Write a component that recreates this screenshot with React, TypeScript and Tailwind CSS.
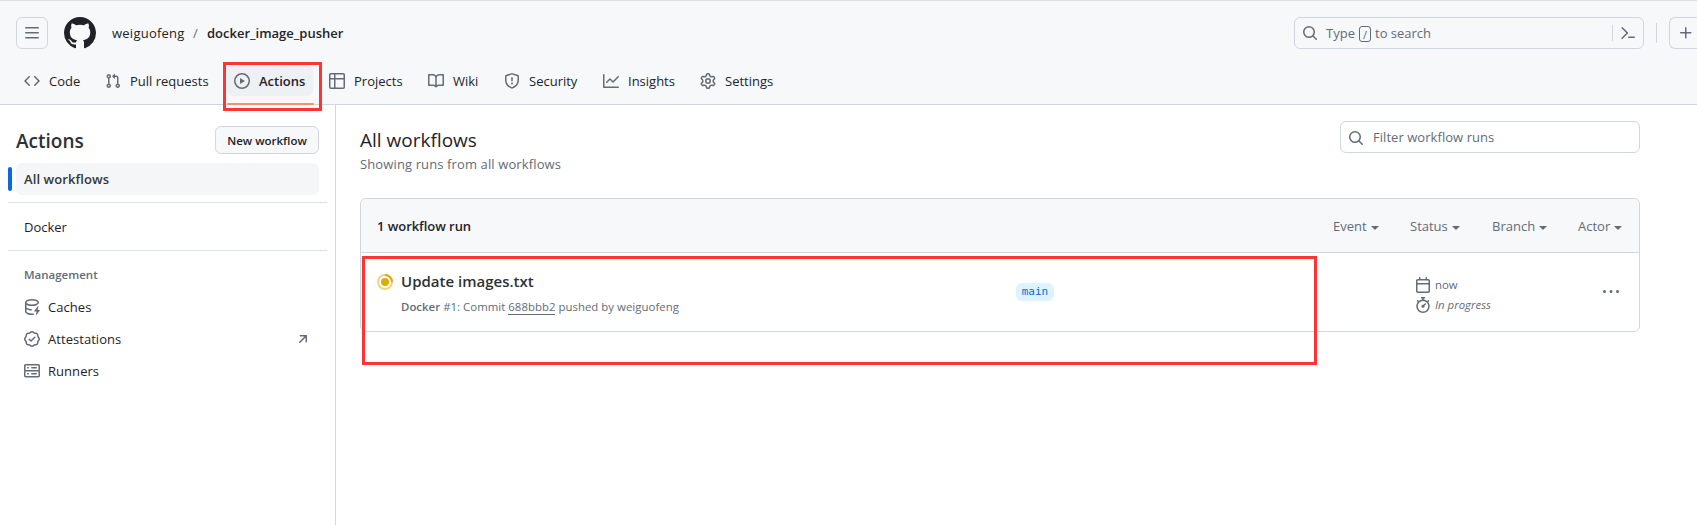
import React from 'react';

const paths = {
  bars: 'M1 2.75A.75.75 0 0 1 1.75 2h12.5a.75.75 0 0 1 0 1.5H1.75A.75.75 0 0 1 1 2.75Zm0 5A.75.75 0 0 1 1.75 7h12.5a.75.75 0 0 1 0 1.5H1.75A.75.75 0 0 1 1 7.75ZM1.75 12h12.5a.75.75 0 0 1 0 1.5H1.75a.75.75 0 0 1 0-1.5Z',
  github: 'M8 0c4.42 0 8 3.58 8 8a8.013 8.013 0 0 1-5.45 7.59c-.4.08-.55-.17-.55-.38 0-.27.01-1.13.01-2.2 0-.75-.25-1.23-.54-1.48 1.78-.2 3.65-.88 3.65-3.95 0-.88-.31-1.59-.82-2.15.08-.2.36-1.02-.08-2.12 0 0-.67-.22-2.2.82-.64-.18-1.32-.27-2-.27-.68 0-1.36.09-2 .27-1.53-1.03-2.2-.82-2.2-.82-.44 1.1-.16 1.92-.08 2.12-.51.56-.82 1.28-.82 2.15 0 3.06 1.86 3.75 3.64 3.95-.23.2-.44.55-.51 1.07-.46.21-1.61.55-2.33-.66-.15-.24-.6-.83-1.23-.82-.67.01-.27.38.01.53.34.19.73.9.82 1.13.16.45.68 1.31 2.69.94 0 .67.01 1.3.01 1.49 0 .21-.15.45-.55.38A7.995 7.995 0 0 1 0 8c0-4.42 3.58-8 8-8Z',
  code: 'm11.28 3.22 4.25 4.25a.75.75 0 0 1 0 1.06l-4.25 4.25a.749.749 0 0 1-1.275-.326.749.749 0 0 1 .215-.734L13.94 8l-3.72-3.72a.749.749 0 0 1 .326-1.275.749.749 0 0 1 .734.215Zm-6.56 0a.751.751 0 0 1 1.042.018.751.751 0 0 1 .018 1.042L2.06 8l3.72 3.72a.749.749 0 0 1-.326 1.275.749.749 0 0 1-.734-.215L.47 8.53a.75.75 0 0 1 0-1.06Z',
  pull: 'M1.5 3.25a2.25 2.25 0 1 1 3 2.122v5.256a2.251 2.251 0 1 1-1.5 0V5.372A2.25 2.25 0 0 1 1.5 3.25Zm5.677-.177L9.573.677A.25.25 0 0 1 10 .854V2.5h1A2.5 2.5 0 0 1 13.5 5v5.628a2.251 2.251 0 1 1-1.5 0V5a1 1 0 0 0-1-1h-1v1.646a.25.25 0 0 1-.427.177L7.177 3.427a.25.25 0 0 1 0-.354ZM3.75 2.5a.75.75 0 1 0 0 1.5.75.75 0 0 0 0-1.5Zm0 9.5a.75.75 0 1 0 0 1.5.75.75 0 0 0 0-1.5Zm8.25.75a.75.75 0 1 0 1.5 0 .75.75 0 0 0-1.5 0Z',
  play: 'M8 0a8 8 0 1 1 0 16A8 8 0 0 1 8 0ZM1.5 8a6.5 6.5 0 1 0 13 0 6.5 6.5 0 0 0-13 0Zm4.879-2.773 4.264 2.559a.25.25 0 0 1 0 .428l-4.264 2.559A.25.25 0 0 1 6 10.559V5.442a.25.25 0 0 1 .379-.215Z',
  table: 'M0 1.75C0 .784.784 0 1.75 0h12.5C15.216 0 16 .784 16 1.75v12.5A1.75 1.75 0 0 1 14.25 16H1.75A1.75 1.75 0 0 1 0 14.25ZM6.5 6.5v8h7.75a.25.25 0 0 0 .25-.25V6.5Zm8-1.5V1.75a.25.25 0 0 0-.25-.25H6.5V5Zm-13 1.5v7.75c0 .138.112.25.25.25H5v-8ZM5 5V1.5H1.75a.25.25 0 0 0-.25.25V5Z',
  book: 'M0 1.75A.75.75 0 0 1 .75 1h4.253c1.227 0 2.317.59 3 1.501A3.743 3.743 0 0 1 11.006 1h4.245a.75.75 0 0 1 .75.75v10.5a.75.75 0 0 1-.75.75h-4.507a2.25 2.25 0 0 0-1.591.659l-.622.621a.75.75 0 0 1-1.06 0l-.622-.621A2.25 2.25 0 0 0 5.258 13H.75a.75.75 0 0 1-.75-.75Zm7.251 10.324.004-5.073-.002-2.253A2.25 2.25 0 0 0 5.003 2.5H1.5v9h3.757a3.75 3.75 0 0 1 1.994.574ZM8.755 4.75l-.004 7.322a3.752 3.752 0 0 1 1.992-.572H14.5v-9h-3.495a2.25 2.25 0 0 0-2.25 2.25Z',
  shield: 'M7.467.133a1.748 1.748 0 0 1 1.066 0l5.25 1.68A1.75 1.75 0 0 1 15 3.48V7c0 1.566-.32 3.182-1.303 4.682-.983 1.498-2.585 2.813-5.032 3.855a1.697 1.697 0 0 1-1.33 0c-2.447-1.042-4.049-2.357-5.032-3.855C1.32 10.182 1 8.566 1 7V3.48a1.75 1.75 0 0 1 1.217-1.667Zm.61 1.429a.25.25 0 0 0-.153 0l-5.25 1.68a.25.25 0 0 0-.174.238V7c0 1.358.275 2.666 1.057 3.86.784 1.194 2.121 2.34 4.366 3.297a.196.196 0 0 0 .154 0c2.245-.956 3.582-2.104 4.366-3.298C13.225 9.666 13.5 8.36 13.5 7V3.48a.251.251 0 0 0-.174-.237l-5.25-1.68ZM8.75 4.75v3a.75.75 0 0 1-1.5 0v-3a.75.75 0 0 1 1.5 0ZM9 10.5a1 1 0 1 1-2 0 1 1 0 0 1 2 0Z',
  graph: 'M1.5 1.75V13.5h13.75a.75.75 0 0 1 0 1.5H.75a.75.75 0 0 1-.75-.75V1.75a.75.75 0 0 1 1.5 0Zm14.28 2.53-5.25 5.25a.75.75 0 0 1-1.06 0L7 7.06 4.28 9.78a.751.751 0 0 1-1.042-.018.751.751 0 0 1-.018-1.042l3.25-3.25a.75.75 0 0 1 1.06 0L10 7.94l4.72-4.72a.751.751 0 0 1 1.042.018.751.751 0 0 1 .018 1.042Z',
  gear: 'M8 0a8.2 8.2 0 0 1 .701.031C9.444.095 9.99.645 10.16 1.29l.288 1.107c.018.066.079.158.212.224.231.114.454.243.668.386.123.082.233.09.299.071l1.103-.303c.644-.176 1.392.021 1.82.63.27.385.506.792.704 1.218.315.675.111 1.422-.364 1.891l-.814.806c-.049.048-.098.147-.088.294.016.257.016.515 0 .772-.01.147.038.246.088.294l.814.806c.475.469.679 1.216.364 1.891a7.977 7.977 0 0 1-.704 1.217c-.428.61-1.176.807-1.82.63l-1.102-.302c-.067-.019-.177-.011-.3.071a5.909 5.909 0 0 1-.668.386c-.133.066-.194.158-.211.224l-.29 1.106c-.168.646-.715 1.196-1.458 1.26a8.006 8.006 0 0 1-1.402 0c-.743-.064-1.289-.614-1.458-1.26l-.289-1.106c-.018-.066-.079-.158-.212-.224a5.738 5.738 0 0 1-.668-.386c-.123-.082-.233-.09-.299-.071l-1.103.303c-.644.176-1.392-.021-1.82-.63a8.12 8.12 0 0 1-.704-1.218c-.315-.675-.111-1.422.363-1.891l.815-.806c.05-.048.098-.147.088-.294a6.214 6.214 0 0 1 0-.772c.01-.147-.038-.246-.088-.294l-.815-.806C.635 6.045.431 5.298.746 4.623a7.92 7.92 0 0 1 .704-1.217c.428-.61 1.176-.807 1.82-.63l1.102.302c.067.019.177.011.3-.071.214-.143.437-.272.668-.386.133-.066.194-.158.211-.224l.29-1.106C6.009.645 6.556.095 7.299.03 7.53.01 7.764 0 8 0Zm-.571 1.525c-.036.003-.108.036-.137.146l-.289 1.105c-.147.561-.549.967-.998 1.189-.173.086-.34.183-.5.29-.417.278-.97.423-1.529.27l-1.103-.303c-.109-.03-.175.016-.195.045-.22.312-.412.644-.573.99-.014.031-.021.11.059.19l.815.806c.411.406.562.957.53 1.456a4.709 4.709 0 0 0 0 .582c.032.499-.119 1.05-.53 1.456l-.815.806c-.081.08-.073.159-.059.19.162.346.353.677.573.989.02.03.085.076.195.046l1.102-.303c.56-.153 1.113-.008 1.53.27.161.107.328.204.501.29.447.222.85.629.997 1.189l.289 1.105c.029.109.101.143.137.146a6.6 6.6 0 0 0 1.142 0c.036-.003.108-.036.137-.146l.289-1.105c.147-.561.549-.967.998-1.189.173-.086.34-.183.5-.29.417-.278.97-.423 1.529-.27l1.103.303c.109.029.175-.016.195-.045.22-.313.411-.644.573-.99.014-.031.021-.11-.059-.19l-.815-.806c-.411-.406-.562-.957-.53-1.456a4.709 4.709 0 0 0 0-.582c-.032-.499.119-1.05.53-1.456l.815-.806c.081-.08.073-.159.059-.19a6.464 6.464 0 0 0-.573-.989c-.02-.03-.085-.076-.195-.046l-1.102.303c-.56.153-1.113.008-1.53-.27a4.44 4.44 0 0 0-.501-.29c-.447-.222-.85-.629-.997-1.189l-.289-1.105c-.029-.11-.101-.143-.137-.146a6.6 6.6 0 0 0-1.142 0ZM11 8a3 3 0 1 1-6 0 3 3 0 0 1 6 0ZM9.5 8a1.5 1.5 0 1 0-3.001.001A1.5 1.5 0 0 0 9.5 8Z',
  search: 'M10.68 11.74a6 6 0 0 1-7.922-8.982 6 6 0 0 1 8.982 7.922l3.04 3.04a.749.749 0 0 1-.326 1.275.749.749 0 0 1-.734-.215ZM11.5 7a4.499 4.499 0 1 0-8.997 0A4.499 4.499 0 0 0 11.5 7Z',
  command: 'm6.354 8.04-4.773 4.773a.75.75 0 1 0 1.061 1.06L7.945 8.57a.75.75 0 0 0 0-1.06L2.642 2.206a.75.75 0 0 0-1.06 1.061L6.353 8.04ZM8.75 11.5a.75.75 0 0 0 0 1.5h5.5a.75.75 0 0 0 0-1.5h-5.5Z',
  plus: 'M7.75 2a.75.75 0 0 1 .75.75V7h4.25a.75.75 0 0 1 0 1.5H8.5v4.25a.75.75 0 0 1-1.5 0V8.5H2.75a.75.75 0 0 1 0-1.5H7V2.75A.75.75 0 0 1 7.75 2Z',
  server: 'M1.75 1h12.5c.966 0 1.75.784 1.75 1.75v4c0 .372-.116.717-.314 1 .198.283.314.628.314 1v4a1.75 1.75 0 0 1-1.75 1.75H1.75A1.75 1.75 0 0 1 0 12.75v-4c0-.358.109-.707.314-1a1.739 1.739 0 0 1-.314-1v-4C0 1.784.784 1 1.75 1ZM1.5 2.75v4c0 .138.112.25.25.25h12.5a.25.25 0 0 0 .25-.25v-4a.25.25 0 0 0-.25-.25H1.75a.25.25 0 0 0-.25.25Zm.25 5.75a.25.25 0 0 0-.25.25v4c0 .138.112.25.25.25h12.5a.25.25 0 0 0 .25-.25v-4a.25.25 0 0 0-.25-.25ZM7 4.75A.75.75 0 0 1 7.75 4h4.5a.75.75 0 0 1 0 1.5h-4.5A.75.75 0 0 1 7 4.75ZM7.75 10h4.5a.75.75 0 0 1 0 1.5h-4.5a.75.75 0 0 1 0-1.5ZM3 4.75A.75.75 0 0 1 3.75 4h.5a.75.75 0 0 1 0 1.5h-.5A.75.75 0 0 1 3 4.75ZM3.75 10h.5a.75.75 0 0 1 0 1.5h-.5a.75.75 0 0 1 0-1.5Z',
  verified: 'm9.585.52.929.68c.153.112.331.186.518.215l1.138.175a2.678 2.678 0 0 1 2.24 2.24l.174 1.139c.029.187.103.365.215.518l.68.928a2.677 2.677 0 0 1 0 3.17l-.68.928a1.174 1.174 0 0 0-.215.518l-.175 1.138a2.678 2.678 0 0 1-2.241 2.241l-1.138.175a1.17 1.17 0 0 0-.518.215l-.928.68a2.677 2.677 0 0 1-3.17 0l-.928-.68a1.174 1.174 0 0 0-.518-.215L3.83 14.41a2.678 2.678 0 0 1-2.24-2.24l-.175-1.138a1.17 1.17 0 0 0-.215-.518l-.68-.928a2.677 2.677 0 0 1 0-3.17l.68-.928c.112-.153.186-.331.215-.518l.175-1.14a2.678 2.678 0 0 1 2.24-2.24l1.139-.175c.187-.029.365-.103.518-.215l.928-.68a2.677 2.677 0 0 1 3.17 0ZM7.303 1.728l-.927.68a2.67 2.67 0 0 1-1.18.489l-1.137.174a1.179 1.179 0 0 0-.987.987l-.174 1.136a2.677 2.677 0 0 1-.489 1.18l-.68.928a1.18 1.18 0 0 0 0 1.394l.68.927c.256.348.424.753.489 1.18l.174 1.137c.078.509.478.909.987.987l1.136.174a2.67 2.67 0 0 1 1.18.489l.928.68c.414.305.979.305 1.394 0l.927-.68a2.67 2.67 0 0 1 1.18-.489l1.137-.174a1.18 1.18 0 0 0 .987-.987l.174-1.136a2.67 2.67 0 0 1 .489-1.18l.68-.928a1.176 1.176 0 0 0 0-1.394l-.68-.927a2.686 2.686 0 0 1-.489-1.18l-.174-1.137a1.179 1.179 0 0 0-.987-.987l-1.136-.174a2.677 2.677 0 0 1-1.18-.489l-.928-.68a1.176 1.176 0 0 0-1.394 0ZM11.28 6.78l-3.75 3.75a.75.75 0 0 1-1.06 0L4.72 8.78a.751.751 0 0 1 .018-1.042.751.751 0 0 1 1.042-.018L7 8.94l3.22-3.22a.751.751 0 0 1 1.042.018.751.751 0 0 1 .018 1.042Z',
  arrow: 'M4.53 4.75A.75.75 0 0 1 5.28 4h6.01a.75.75 0 0 1 .75.75v6.01a.75.75 0 0 1-1.5 0v-4.2l-5.26 5.261a.749.749 0 0 1-1.275-.326.749.749 0 0 1 .215-.734L9.48 5.5h-4.2a.75.75 0 0 1-.75-.75Z',
  calendar: 'M4.75 0a.75.75 0 0 1 .75.75V2h5V.75a.75.75 0 0 1 1.5 0V2h1.25c.966 0 1.75.784 1.75 1.75v10.5A1.75 1.75 0 0 1 13.25 16H2.75A1.75 1.75 0 0 1 1 14.25V3.75C1 2.784 1.784 2 2.75 2H4V.75A.75.75 0 0 1 4.75 0ZM2.5 7.5v6.75c0 .138.112.25.25.25h10.5a.25.25 0 0 0 .25-.25V7.5Zm10.75-4H2.75a.25.25 0 0 0-.25.25V6h11V3.75a.25.25 0 0 0-.25-.25Z',
  stopwatch: 'M5.75.75A.75.75 0 0 1 6.5 0h3a.75.75 0 0 1 0 1.5h-.75v1l-.001.041a6.724 6.724 0 0 1 3.464 1.435l.007-.006.75-.75a.749.749 0 0 1 1.275.326.749.749 0 0 1-.215.734l-.75.75-.006.007a6.75 6.75 0 1 1-10.548 0L2.72 5.03l-.75-.75a.751.751 0 0 1 .018-1.042.751.751 0 0 1 1.042-.018l.75.75.007.006A6.72 6.72 0 0 1 7.25 2.541V1.5H6.5a.75.75 0 0 1-.75-.75ZM8 14.5a5.25 5.25 0 1 0-.001-10.501A5.25 5.25 0 0 0 8 14.5Zm.389-6.7 1.33-1.33a.75.75 0 1 1 1.061 1.06L9.45 8.861A1.503 1.503 0 0 1 8 10.75a1.499 1.499 0 1 1 .389-2.95Z',
  kebab: 'M8 9a1.5 1.5 0 1 0 0-3 1.5 1.5 0 0 0 0 3ZM1.5 9a1.5 1.5 0 1 0 0-3 1.5 1.5 0 0 0 0 3Zm13 0a1.5 1.5 0 1 0 0-3 1.5 1.5 0 0 0 0 3Z',
  cache: 'M2.5 5.724V8c0 .248.238.7 1.169 1.159.874.43 2.144.745 3.62.822a.75.75 0 1 1-.078 1.498c-1.622-.085-3.102-.432-4.204-.975a5.565 5.565 0 0 1-.507-.28V12.5c0 .133.058.318.282.551.227.237.591.483 1.101.707 1.015.447 2.47.742 4.117.742.406 0 .802-.018 1.183-.052a.751.751 0 1 1 .134 1.494C8.89 15.98 8.45 16 8 16c-1.805 0-3.475-.32-4.721-.869-.623-.274-1.173-.619-1.579-1.041-.408-.425-.7-.964-.7-1.59v-9c0-.626.292-1.165.7-1.591.406-.42.956-.766 1.579-1.04C4.525.32 6.195 0 8 0c1.806 0 3.476.32 4.721.869.623.274 1.173.619 1.579 1.041.408.425.7.964.7 1.59 0 .626-.292 1.165-.7 1.591-.406.42-.956.766-1.578 1.04C11.475 6.68 9.805 7 8 7c-1.805 0-3.475-.32-4.721-.869a6.15 6.15 0 0 1-.779-.407Zm0-2.224c0 .133.058.318.282.551.227.237.591.483 1.101.707C4.898 5.205 6.353 5.5 8 5.5c1.646 0 3.101-.295 4.118-.742.508-.224.873-.471 1.1-.708.224-.232.282-.417.282-.55 0-.133-.058-.318-.282-.551-.227-.237-.591-.483-1.101-.707C11.102 1.795 9.647 1.5 8 1.5c-1.646 0-3.101.295-4.118.742-.508.224-.873.471-1.1.708-.224.232-.282.417-.282.55Z M14.49 7.582a.375.375 0 0 0-.66-.313l-3.625 4.625a.375.375 0 0 0 .295.606h2.127l-.619 2.922a.375.375 0 0 0 .666.304l3.125-4.125A.375.375 0 0 0 15.5 11h-1.778l.769-3.418Z',
};

type IconName = keyof typeof paths;

function Icon({ name, className = 'size-4' }: { name: IconName; className?: string }) {
  return (
    <svg viewBox="0 0 16 16" fill="currentColor" className={`shrink-0 ${className}`} aria-hidden="true">
      <path d={paths[name]} />
    </svg>
  );
}

const tabs: { icon: IconName; label: string; width: string; active?: boolean }[] = [
  { icon: 'code', label: 'Code', width: 'w-[73px]' },
  { icon: 'pull', label: 'Pull requests', width: 'w-[122px]' },
  { icon: 'play', label: 'Actions', width: 'w-[86px]', active: true },
  { icon: 'table', label: 'Projects', width: 'w-[91px]' },
  { icon: 'book', label: 'Wiki', width: 'w-[68px]' },
  { icon: 'shield', label: 'Security', width: 'w-[91px]' },
  { icon: 'graph', label: 'Insights', width: 'w-[89px]' },
  { icon: 'gear', label: 'Settings', width: 'w-[92px]' },
];

function Header() {
  return (
    <header className="flex h-[105px] flex-col border-t border-b border-t-[#dfe0db] border-b-[#d0d7de] bg-[#f6f8fa]">
      <div className="flex h-16 items-center pl-4">
        <button className="flex size-8 items-center justify-center rounded-md border border-[#d0d7de] text-[#636c76]">
          <Icon name="bars" />
        </button>
        <Icon name="github" className="ml-4 size-8 text-[#1f2328]" />
        <nav className="mt-0.5 ml-4 flex items-center">
          <span className="w-[81px] tracking-[0.24px]">weiguofeng</span>
          <span className="w-[14px] text-[#636c76]">/</span>
          <span className="font-semibold">docker_image_pusher</span>
        </nav>
        <div className="mr-[12px] ml-auto flex h-8 w-[350px] items-center rounded-md border border-[#d0d7de] pl-[7px] text-[#636c76]">
          <Icon name="search" />
          <span className="mt-0.5 ml-2 w-[33px]">Type</span>
          <kbd className="mt-0.5 flex h-4 w-3 items-center justify-center rounded-[3px] border border-[#636c76] font-['Open_Sans'] text-[11px] leading-none">/</kbd>
          <span className="mt-0.5 ml-1">to search</span>
          <span className="ml-auto h-4 w-px bg-[#d0d7de]" />
          <Icon name="command" className="mr-[7px] ml-[7px] size-4" />
        </div>
        <span className="h-5 w-px bg-[#d0d7de]" />
        <button className="ml-[12px] flex h-8 w-7 items-center rounded-l-md border border-r-0 border-[#d0d7de] pl-[8px] text-[#636c76]">
          <Icon name="plus" />
        </button>
      </div>
      <nav className="flex h-[39px] gap-2 pl-4">
        {tabs.map((t) => (
          <div key={t.label} className={`relative ${t.width}`}>
            <a className={`flex h-[31px] items-center rounded-md ${t.active ? 'bg-[#eef1f4] pl-[7px] font-semibold' : 'pl-2'}`}>
              <Icon name={t.icon} className="size-4 text-[#636c76]" />
              <span className="mt-0.5 ml-[9px] whitespace-nowrap">{t.label}</span>
            </a>
            {t.active && (
              <>
                <span className="absolute -bottom-px left-0 h-0.5 w-[87px] rounded-full bg-[#fd8c73]" />
                <span className="absolute -top-[3px] -left-[4px] z-10 h-[49px] w-[99px] border-3 border-[#fb3434]" />
              </>
            )}
          </div>
        ))}
      </nav>
    </header>
  );
}

function SideLink({ icon, label, external }: { icon: IconName; label: string; external?: boolean }) {
  return (
    <a className="mx-4 flex h-8 items-center px-2">
      <Icon name={icon} className="size-4 text-[#636c76]" />
      <span className="mt-0.5 ml-2 tracking-[0.05px]">{label}</span>
      {external && <Icon name="arrow" className="ml-auto size-4 text-[#636c76]" />}
    </a>
  );
}

function Sidebar() {
  return (
    <aside className="w-[336px] shrink-0 border-r border-[#d0d7de]">
      <div className="flex items-center justify-between px-4 pt-[21px]">
        <h2 className="mt-0.5 text-[19px] leading-[26px] font-semibold text-[#2d3136]">Actions</h2>
        <button className="h-7 w-[104px] rounded-md border border-[#d0d7de] bg-[#f6f8fa] pt-px text-[11.5px] font-semibold">New workflow</button>
      </div>
      <div className="mt-[9px] flex items-center pl-2">
        <span className="h-6 w-1 rounded-full bg-[#0969da]" />
        <a className="ml-1 flex h-8 w-[303px] items-center rounded-md bg-[#f5f6f8] pl-2 font-semibold tracking-[0.08px] text-[#33373c]">
          <span className="mt-0.5">All workflows</span>
        </a>
      </div>
      <hr className="mx-2 mt-[7px] border-[#d8dee4]" />
      <a className="mx-4 mt-2 flex h-8 items-center pt-0.5 pl-2">Docker</a>
      <hr className="mx-2 mt-[7px] border-[#d8dee4]" />
      <h3 className="mt-2 flex h-8 items-center pl-6 text-[11.5px] font-semibold text-[#636c76]">Management</h3>
      <SideLink icon="cache" label="Caches" />
      <SideLink icon="verified" label="Attestations" external />
      <SideLink icon="server" label="Runners" />
    </aside>
  );
}

const filters = [
  { label: 'Event', width: 'w-[77px]' },
  { label: 'Status', width: 'w-[82px]' },
  { label: 'Branch', width: 'w-[86px]' },
  { label: 'Actor', width: 'w-[61px]' },
];

function RunRow() {
  return (
    <div className="relative flex h-[78px] items-start pl-4">
      <svg viewBox="0 0 16 16" className="mt-[21px] size-4" fill="none" aria-hidden="true">
        <circle cx="8" cy="8" r="7" stroke="#dbab0a" strokeOpacity="0.5" strokeWidth="2" />
        <path d="M8 1a7 7 0 0 1 7 7" stroke="#dbab0a" strokeWidth="2" />
        <circle cx="8" cy="8" r="4" fill="#dbab0a" />
      </svg>
      <div className="ml-2 w-[615px] pt-4">
        <div className="text-[15px] leading-6 font-semibold text-[#2d3136]">Update images.txt</div>
        <div className="mt-[5px] text-[11.4px] leading-[18px] tracking-[0.03px] whitespace-nowrap text-[#636c76]">
          <b className="font-semibold">Docker</b> #1: Commit <span className="border-b border-[#636c76]">688bbb2</span> pushed by weiguofeng
        </div>
      </div>
      <span className="mt-[30px] flex h-[18px] w-[38px] items-center justify-center rounded-md bg-[#ddf4ff] pt-px font-['DejaVu_Sans_Mono'] text-[11px] text-[#0969da]">main</span>
      <div className="mt-[22px] ml-[361px] w-[180px] text-[11.4px] text-[#636c76]">
        <div className="flex h-5 items-center gap-1">
          <Icon name="calendar" />
          now
        </div>
        <div className="flex h-5 items-center gap-1">
          <Icon name="stopwatch" />
          <em>In progress</em>
        </div>
      </div>
      <Icon name="kebab" className="mt-[31px] ml-[8px] size-4 text-[#636c76]" />
      <span className="absolute top-[3px] left-[1px] z-10 h-[109px] w-[955px] border-3 border-[#fb3434]" />
    </div>
  );
}

export default function App() {
  return (
    <div className="h-[525px] w-[1697px] overflow-hidden bg-white font-['Open_Sans','Noto_Sans',sans-serif] text-[13px] text-[#1f2328]">
      <Header />
      <div className="flex h-[420px]">
        <Sidebar />
        <main className="w-[1304px] pl-6">
          <div className="flex justify-between pt-4">
            <div>
              <h1 className="pt-[5px] text-[19px] leading-[28px]">All workflows</h1>
              <p className="leading-5 tracking-[0.12px] text-[#636c76]">Showing runs from all workflows</p>
            </div>
            <div className="flex h-8 w-[300px] items-center rounded-md border border-[#d0d7de] pl-[7px] text-[#636c76]">
              <Icon name="search" className="mt-0.5 size-4" />
              <span className="mt-0.5 ml-[9px] tracking-[0.05px]">Filter workflow runs</span>
            </div>
          </div>
          <section className="mt-6 rounded-md border border-[#d0d7de]">
            <div className="flex h-[54px] items-center rounded-t-md border-b border-[#d0d7de] bg-[#f6f8fa] pl-4">
              <strong className="mt-0.5 font-semibold tracking-[-0.05px]">1 workflow run</strong>
              <div className="mt-0.5 ml-auto flex text-[#636c76]">
                {filters.map((f) => (
                  <span key={f.label} className={`flex items-center gap-1 ${f.width}`}>
                    {f.label}
                    <span className="mt-0.5 border-x-4 border-t-4 border-x-transparent border-t-[#636c76]" />
                  </span>
                ))}
              </div>
            </div>
            <RunRow />
          </section>
        </main>
      </div>
    </div>
  );
}
